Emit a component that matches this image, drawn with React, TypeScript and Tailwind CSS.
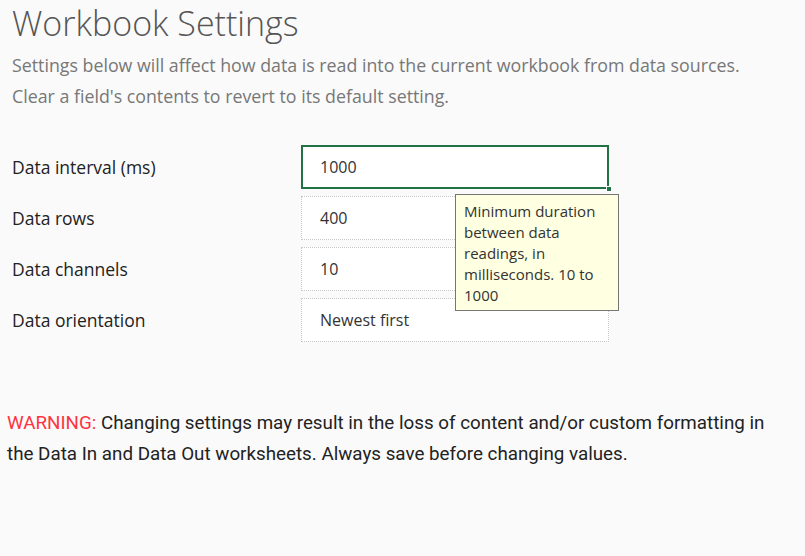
import React from 'react';

const ROWS = [
  { label: 'Data interval (ms)', value: '1000' },
  { label: 'Data rows', value: '400' },
  { label: 'Data channels', value: '10' },
  { label: 'Data orientation', value: 'Newest first' },
];

export default function App() {
  return (
    <div className="w-[805px] h-[556px] bg-[#fafafa] overflow-hidden font-['Open_Sans',sans-serif]">
      <div className="pl-3 pt-0.5">
        <h1 className="text-[34px] leading-[42px] font-light text-[#555]">Workbook Settings</h1>
        <p className="mt-[6px] text-[17.8px] leading-[31px] text-[#777]">
          Settings below will affect how data is read into the current workbook from data sources.
          <br />
          Clear a field's contents to revert to its default setting.
        </p>
      </div>

      <div className="mt-[33px] pl-3 flex flex-col gap-[7px]">
        {ROWS.map((row, i) => (
          <div key={row.label} className="flex items-center">
            <div className="w-[289px] text-[17.5px] text-[#222]">{row.label}</div>
            <div className="relative">
              <div
                className={
                  i === 0
                    ? 'w-[308px] h-11 bg-white border-2 border-[#217346] pl-[17px] flex items-center text-[16px] text-[#333]'
                    : 'w-[308px] h-11 bg-white border border-dotted border-[#c8c8c8] pl-[18px] flex items-center text-[16px] text-[#333]'
                }
              >
                {row.value}
              </div>
              {i === 0 && (
                <>
                  <div className="absolute right-[-3px] bottom-[-3px] w-[6px] h-[6px] bg-[#217346] border border-white" />
                  <div className="absolute left-[154px] top-[49px] z-10 w-[164px] bg-[#ffffe1] border border-[#767676] px-2 pt-[6px] pb-[4px] text-[15px] leading-[21px] text-[#333]">
                    Minimum duration between data readings, in milliseconds. 10 to 1000
                  </div>
                </>
              )}
            </div>
          </div>
        ))}
      </div>

      <p className="mt-[66px] pl-[7px] w-[778px] text-[18.8px] leading-[31px] text-[#222] font-['Roboto',sans-serif]">
        <span className="text-[#ff3340]">WARNING:</span> Changing settings may result in the loss of content and/or
        custom formatting in the Data In and Data Out worksheets. Always save before changing values.
      </p>
    </div>
  );
}
